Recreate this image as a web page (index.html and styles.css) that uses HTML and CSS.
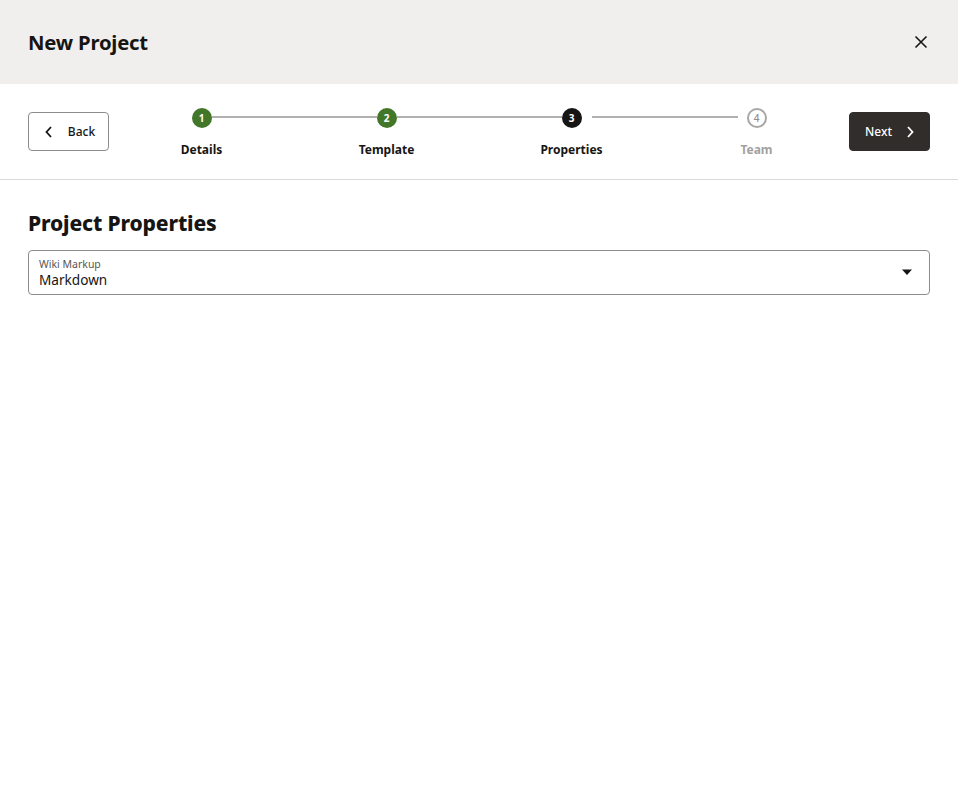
FILE: index.html
```html
<!DOCTYPE html>
<html lang="en">
<head>
<meta charset="utf-8">
<title>New Project</title>
<link rel="stylesheet" href="styles.css">
</head>
<body>
<div class="dialog">
  <header class="dialog-header">
    <h1 class="dialog-title">New Project</h1>
    <button class="close-btn" aria-label="Close">
      <svg width="14" height="14" viewBox="0 0 14 14"><path d="M1.5 1.5 L12.5 12.5 M12.5 1.5 L1.5 12.5" stroke="#161513" stroke-width="1.6" fill="none"/></svg>
    </button>
  </header>

  <div class="train-bar">
    <button class="btn btn-outline">
      <svg class="chev" width="10" height="14" viewBox="0 0 10 14"><path d="M7 2 L2.5 7 L7 12" stroke="#161513" stroke-width="1.8" fill="none"/></svg>
      <span>Back</span>
    </button>

    <ol class="train">
      <li class="step done"><span class="dot">1</span><span class="label">Details</span></li>
      <li class="step done"><span class="dot">2</span><span class="label">Template</span></li>
      <li class="step current link-gap"><span class="dot">3</span><span class="label">Properties</span></li>
      <li class="step todo"><span class="dot">4</span><span class="label">Team</span></li>
    </ol>

    <button class="btn btn-solid">
      <span>Next</span>
      <svg class="chev" width="10" height="14" viewBox="0 0 10 14"><path d="M3 2 L7.5 7 L3 12" stroke="#ffffff" stroke-width="1.8" fill="none"/></svg>
    </button>
  </div>

  <main class="content">
    <h2 class="section-title">Project Properties</h2>
    <div class="select">
      <div class="select-text">
        <span class="select-label">Wiki Markup</span>
        <span class="select-value">Markdown</span>
      </div>
      <svg class="caret" width="12" height="8" viewBox="0 0 12 8"><path d="M1 1.5 H11 L6 7 Z" fill="#161513"/></svg>
    </div>
  </main>
</div>
</body>
</html>
```

FILE: styles.css
```css
* { box-sizing: border-box; }
html, body { margin: 0; padding: 0; background: #ffffff; }
body {
  font-family: "Noto Sans", "Open Sans", sans-serif;
  color: #161513;
}
.dialog { width: 958px; min-height: 808px; }

.dialog-header {
  height: 84px;
  background: #f1efed;
  display: flex;
  align-items: center;
  justify-content: space-between;
  padding: 0 28px;
}
.dialog-title {
  margin: 0 0 1px;
  font-size: 20.3px;
  font-weight: 700;
  letter-spacing: -0.2px;
}
.close-btn {
  border: 0;
  background: transparent;
  padding: 0;
  width: 14px;
  height: 14px;
  margin-right: 2px;
  display: flex;
  cursor: pointer;
}

.train-bar {
  height: 96px;
  border-bottom: 1px solid #dcdad8;
  display: flex;
  align-items: flex-start;
  padding: 28px 28px 0;
}
.btn {
  height: 39px;
  width: 81px;
  border-radius: 4px;
  display: flex;
  align-items: center;
  justify-content: center;
  gap: 14px;
  font-family: inherit;
  font-size: 12px;
  font-weight: 500;
  padding: 0;
  cursor: pointer;
}
.btn-outline {
  background: #fff;
  border: 1px solid #8f8d8b;
  color: #161513;
  padding-left: 2px;
}
.btn-solid {
  background: #312d2a;
  border: 1px solid #312d2a;
  color: #fff;
  gap: 13px;
  padding-left: 1px;
}

.train {
  flex: 1;
  list-style: none;
  margin: -4px 0 0;
  padding: 0;
  display: grid;
  grid-template-columns: repeat(4, 1fr);
}
.step {
  position: relative;
  display: flex;
  flex-direction: column;
  align-items: center;
  gap: 14px;
}
.step::after {
  content: "";
  position: absolute;
  top: 8px;
  left: calc(50% + 10px);
  width: calc(100% - 20px);
  height: 2px;
  background: #b2b0ae;
}
.step.todo::after { display: none; }
.step.link-gap::after {
  left: calc(50% + 20px);
  width: calc(100% - 39px);
}
.dot {
  width: 20px;
  height: 20px;
  border-radius: 50%;
  display: flex;
  align-items: center;
  justify-content: center;
  font-size: 10px;
  font-weight: 700;
  line-height: 1;
  color: #fff;
}
.done .dot { background: #427629; }
.current .dot { background: #161513; }
.todo .dot {
  background: #fff;
  border: 2px solid #a9a7a5;
  color: #8f8d8b;
  font-weight: 500;
}
.label {
  font-size: 12px;
  font-weight: 700;
  color: #161513;
  line-height: 16px;
}
.todo .label { color: #a3a1a0; }

.content { padding: 28px 28px 0; }
.section-title {
  margin: 0 0 12px;
  font-size: 21px;
  font-weight: 800;
  line-height: 30px;
  letter-spacing: -0.15px;
}
.select {
  height: 45px;
  border: 1px solid #8f8d8b;
  border-radius: 4px;
  display: flex;
  align-items: center;
  justify-content: space-between;
  padding: 0 16px 0 10px;
}
.select-text {
  display: flex;
  flex-direction: column;
  margin-top: 1px;
}
.select-label {
  font-size: 10.5px;
  line-height: 13px;
  color: #5a5856;
}
.select-value {
  font-size: 13.6px;
  line-height: 18px;
  color: #161513;
}
.caret { margin-bottom: 2px; }
```
